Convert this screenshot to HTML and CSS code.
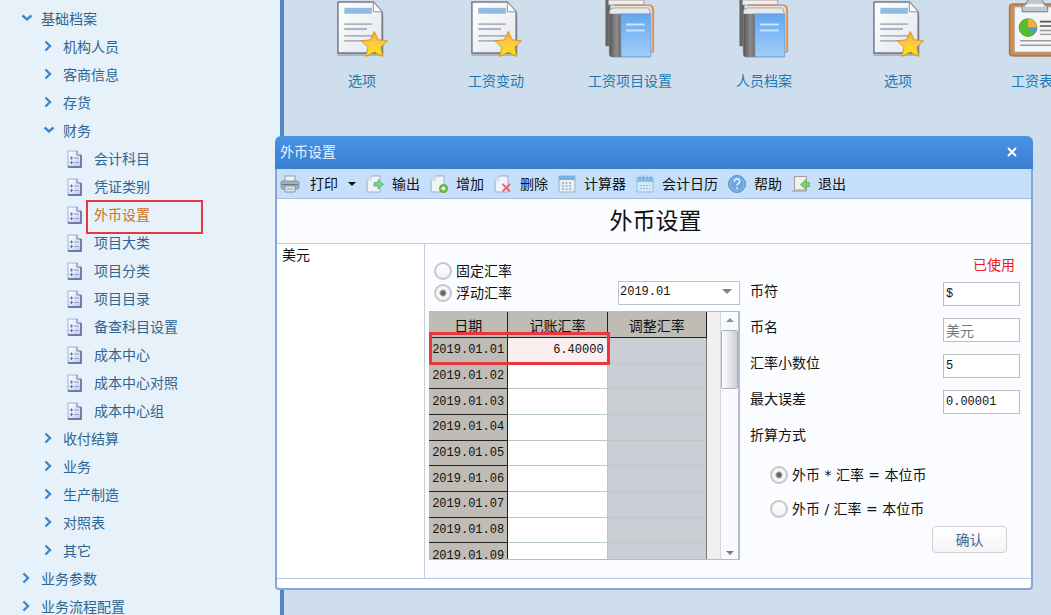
FILE: index.html
```
<!DOCTYPE html>
<html lang="zh-CN">
<head>
    <meta charset="UTF-8">
    <meta name="viewport" content="width=device-width, initial-scale=1.0">
    <title>外币设置</title>
    <link rel="stylesheet" href="styles.css">
</head>
<body>
    <!-- 图标 -->
    <svg class="sprite" width="0" height="0">
        <defs>
            <linearGradient id="gPaper" x1="0" y1="0" x2="1" y2="1">
                <stop offset="0" stop-color="#ffffff"/><stop offset="1" stop-color="#e2e5ea"/>
            </linearGradient>
            <linearGradient id="gStar" x1="0" y1="0" x2="0" y2="1">
                <stop offset="0" stop-color="#f9a51f"/><stop offset=".45" stop-color="#ffc947"/><stop offset="1" stop-color="#ffe600"/>
            </linearGradient>
            <linearGradient id="gBook" x1="0" y1="0" x2="0" y2="1">
                <stop offset="0" stop-color="#62a6ee"/><stop offset="1" stop-color="#a3cef8"/>
            </linearGradient>
            <linearGradient id="gSpine" x1="0" y1="0" x2="1" y2="0">
                <stop offset="0" stop-color="#555"/><stop offset=".6" stop-color="#8d8d8d"/><stop offset="1" stop-color="#6b6b6b"/>
            </linearGradient>
            <linearGradient id="gLeaf" x1="0" y1="0" x2="1" y2="1">
                <stop offset="0" stop-color="#ffffff"/><stop offset="1" stop-color="#b9cff5"/>
            </linearGradient>
        </defs>
        <symbol id="i-right" viewBox="0 0 10 12"><path d="M2.5 1.5 7 6 2.5 10.5" fill="none" stroke="#3f86cf" stroke-width="2.4"/></symbol>
        <symbol id="i-down" viewBox="0 0 12 10"><path d="M1.5 2.5 6 6.5 10.5 2.5" fill="none" stroke="#3f86cf" stroke-width="2.4"/></symbol>
        <symbol id="i-leaf" viewBox="0 0 15 18">
            <path d="M1 1h9l4 4v12H1z" fill="url(#gLeaf)" stroke="#a3aed0"/>
            <path d="M14 5v12H1" fill="none" stroke="#5a5f95" stroke-width="1.4"/>
            <path d="M10 1v4h4" fill="#fff" stroke="#6b7099"/>
            <path d="M3 8h3M4.500 6.500v3M3 12.500h3M4.500 11v3" stroke="#6a7096"/>
            <path d="M7.500 8h4M7.500 12.500h4" stroke="#8b98c0"/>
        </symbol>
        <symbol id="i-doc" viewBox="0 0 54 60">
            <path d="M2 3h38l9 11v41H2z" fill="#000" opacity=".18" transform="translate(0 2)"/>
            <path d="M2.500 2h36l9 10v42h-45z" fill="url(#gPaper)" stroke="#737889" stroke-width="1.500"/>
            <path d="M38.500 2v10h9z" fill="#fff" stroke="#8d93a3"/>
            <path d="M9 8h28v6H9z" fill="#8fbce1"/>
            <path d="M9 24.500h28M9 29.500h23M9 36.500h28M9 41.500h22" stroke="#aeb1c1" stroke-width="1.800"/>
            <path d="M39.500 32l4 8.500 9.500 1-7 6.500 2 9.500-8.500-4.500-8.500 4.500 2-9.500-7-6.500 9.500-1z" fill="url(#gStar)" stroke="#cf8811" stroke-width=".8" stroke-linejoin="round"/>
        </symbol>
        <symbol id="i-book" viewBox="0 0 54 60">
            <path d="M2 0h5v47H2z" fill="#666"/>
            <path d="M5 0h36v5H5z" fill="#f1eeee" stroke="#99938f" stroke-width=".8"/>
            <path d="M11 5h37q3 1 3 5v43h-5z" fill="#e6a266" stroke="#b66f38" stroke-width=".6"/>
            <path d="M9 6h38l2 3v43H9z" fill="#eee5df"/>
            <path d="M6 12q1-4 5-4h35l2 7v43H9q-3 0-3-3z" fill="#e9e9eb" stroke="#949494" stroke-width=".8"/>
            <path d="M6 14h12v44H9q-3 0-3-3z" fill="url(#gSpine)"/>
            <path d="M18 14h30v43.500H18z" fill="url(#gBook)" stroke="#6aa5e4" stroke-width=".8"/>
            <path d="M23 25h19M23 31h19" stroke="#c8e5ff" stroke-width="2"/>
        </symbol>
        <symbol id="i-board" viewBox="0 0 54 60">
            <g transform="translate(3 0)">
                <rect x="1" y="4" width="52" height="53" rx="3" fill="#cf8a50" stroke="#9b602f"/>
                <path d="M6 7h42v46H6z" fill="#f4f5f7" stroke="#aaa"/>
                <path d="M14 12v-5q0-2 4-3 1-6 9-6t9 6q4 1 4 3v5z" fill="#c3c7cc" stroke="#777"/>
                <path d="M18 4h18v3H18z" fill="#f1f1f1"/>
                <circle cx="20" cy="28" r="9" fill="#59bd31" stroke="#4f9d33"/>
                <path d="M20 28v-9a9 9 0 0 1 9 9z" fill="#f7af3c"/>
                <path d="M20 28h9a9 9 0 0 1-3 6.500z" fill="#5298e0"/>
                <path d="M32 22h14M32 26.500h14" stroke="#555" stroke-width="1.600"/>
                <path d="M32 31h14M32 35h14M12 41.500h34M12 46h34" stroke="#999" stroke-width="1.400"/>
            </g>
        </symbol>
        <symbol id="i-print" viewBox="0 0 20 18">
            <path d="M5 1h10v6H5z" fill="#eef4fa" stroke="#8d9baa"/>
            <rect x="1" y="6" width="18" height="8" rx="1.500" fill="#a4afbc" stroke="#8492a2"/>
            <path d="M2 9.500h16" stroke="#68788a"/>
            <path d="M5 11h10v6H5z" fill="#dfe8f1" stroke="#8492a2"/>
            <path d="M7 14h6" stroke="#8492a2"/>
        </symbol>
        <symbol id="i-sheet" viewBox="0 0 18 18">
            <path d="M1 5 5 1h9v16H1z" fill="#eef4fa" stroke="#9aafc5"/>
            <path d="M5 1v4H1z" fill="#fff" stroke="#b3c3d4"/>
        </symbol>
        <symbol id="i-export" viewBox="0 0 18 18">
            <use href="#i-sheet"/>
            <path d="M8 7.500h4V4.500l5.500 4.800-5.500 4.800v-3H8z" fill="#7bd18b" stroke="#56b56a" stroke-width=".8"/>
        </symbol>
        <symbol id="i-add" viewBox="0 0 18 18">
            <use href="#i-sheet"/>
            <circle cx="13.500" cy="13.500" r="4" fill="#78c244" stroke="#5ba72d"/>
            <path d="M11.500 13.500h4M13.500 11.500v4" stroke="#fff" stroke-width="1.400"/>
        </symbol>
        <symbol id="i-del" viewBox="0 0 18 18">
            <use href="#i-sheet"/>
            <path d="M8.500 9l7.500 7.500M16 9l-7.500 7.500" stroke="#e56b74" stroke-width="2"/>
        </symbol>
        <symbol id="i-calc" viewBox="0 0 18 18">
            <path d="M1 1h16v16H1z" fill="#e9eff6" stroke="#a1b0c1"/>
            <path d="M1 1h16v4H1z" fill="#74b1e5"/>
            <path d="M4 8h10M4 11h10M4 14h10" stroke="#9ba9ba" stroke-width="1.700" stroke-dasharray="2 1.500"/>
        </symbol>
        <symbol id="i-date" viewBox="0 0 18 18">
            <path d="M1 2.500h16V17H1z" fill="#d6e9f9" stroke="#93bde0"/>
            <path d="M1 3h16v4H1z" fill="#8abce5"/>
            <path d="M4 .5v4M7.500.5v4M11 .5v4M14.500.5v4" stroke="#6ba4d5"/>
            <path d="M4 10.500h10M4 13.500h10" stroke="#94bcdd" stroke-dasharray="2 1"/>
        </symbol>
        <symbol id="i-help" viewBox="0 0 18 18">
            <circle cx="9" cy="9" r="8.500" fill="#6ca5df" stroke="#5a91cc"/>
            <circle cx="9" cy="9" r="7" fill="none" stroke="#90bde9"/>
            <path d="M6.300 7q0-3 2.700-3t2.700 2.500q0 1.500-1.700 2.300-1 .6-1 2" fill="none" stroke="#e8f4ff" stroke-width="1.500"/>
            <circle cx="9" cy="13.300" r="1" fill="#e8f4ff"/>
        </symbol>
        <symbol id="i-exit" viewBox="0 0 18 18">
            <path d="M2.500 1.500h12V15h-12z" fill="#eef2f2" stroke="#a39d95"/>
            <path d="M0 16h15" stroke="#b7aaa0" stroke-width="1.500"/>
            <path d="M18 7.500h-4V4.500L8.500 9.500l5.500 5v-3h4z" fill="#80cf78" stroke="#56ae50" stroke-width=".8"/>
        </symbol>
    </svg>

    <!-- 左侧菜单树 -->
    <nav class="sidebar">
        <ul class="tree">
            <li><a href="#"><svg class="down"><use href="#i-down"/></svg>基础档案</a>
                <ul>
                    <li><a href="#"><svg><use href="#i-right"/></svg>机构人员</a></li>
                    <li><a href="#"><svg><use href="#i-right"/></svg>客商信息</a></li>
                    <li><a href="#"><svg><use href="#i-right"/></svg>存货</a></li>
                    <li><a href="#"><svg class="down"><use href="#i-down"/></svg>财务</a>
                        <ul class="leaves">
                            <li><a href="#"><svg><use href="#i-leaf"/></svg>会计科目</a></li>
                            <li><a href="#"><svg><use href="#i-leaf"/></svg>凭证类别</a></li>
                            <li><a href="#" class="current"><svg><use href="#i-leaf"/></svg>外币设置</a></li>
                            <li><a href="#"><svg><use href="#i-leaf"/></svg>项目大类</a></li>
                            <li><a href="#"><svg><use href="#i-leaf"/></svg>项目分类</a></li>
                            <li><a href="#"><svg><use href="#i-leaf"/></svg>项目目录</a></li>
                            <li><a href="#"><svg><use href="#i-leaf"/></svg>备查科目设置</a></li>
                            <li><a href="#"><svg><use href="#i-leaf"/></svg>成本中心</a></li>
                            <li><a href="#"><svg><use href="#i-leaf"/></svg>成本中心对照</a></li>
                            <li><a href="#"><svg><use href="#i-leaf"/></svg>成本中心组</a></li>
                        </ul>
                    </li>
                    <li><a href="#"><svg><use href="#i-right"/></svg>收付结算</a></li>
                    <li><a href="#"><svg><use href="#i-right"/></svg>业务</a></li>
                    <li><a href="#"><svg><use href="#i-right"/></svg>生产制造</a></li>
                    <li><a href="#"><svg><use href="#i-right"/></svg>对照表</a></li>
                    <li><a href="#"><svg><use href="#i-right"/></svg>其它</a></li>
                </ul>
            </li>
            <li><a href="#"><svg><use href="#i-right"/></svg>业务参数</a></li>
            <li><a href="#"><svg><use href="#i-right"/></svg>业务流程配置</a></li>
        </ul>
    </nav>

    <!-- 桌面快捷方式 -->
    <main class="desktop">
        <a href="#" class="shortcut"><svg><use href="#i-doc"/></svg>选项</a>
        <a href="#" class="shortcut"><svg><use href="#i-doc"/></svg>工资变动</a>
        <a href="#" class="shortcut"><svg><use href="#i-book"/></svg>工资项目设置</a>
        <a href="#" class="shortcut"><svg><use href="#i-book"/></svg>人员档案</a>
        <a href="#" class="shortcut"><svg><use href="#i-doc"/></svg>选项</a>
        <a href="#" class="shortcut"><svg><use href="#i-board"/></svg>工资表</a>
    </main>

    <!-- 外币设置窗口 -->
    <section class="window">
        <header class="titlebar">
            <span>外币设置</span>
            <button type="button" class="close" aria-label="关闭"><svg viewBox="0 0 10 10"><path d="M1 1l8 8M9 1L1 9" stroke="#fff" stroke-width="2"/></svg></button>
        </header>
        <div class="window-body">
            <div class="toolbar">
                <button type="button" class="print"><svg><use href="#i-print"/></svg>打印<i class="caret"></i></button>
                <button type="button"><svg><use href="#i-export"/></svg>输出</button>
                <button type="button"><svg><use href="#i-add"/></svg>增加</button>
                <button type="button"><svg><use href="#i-del"/></svg>删除</button>
                <button type="button"><svg><use href="#i-calc"/></svg>计算器</button>
                <button type="button"><svg><use href="#i-date"/></svg>会计日历</button>
                <button type="button"><svg><use href="#i-help"/></svg>帮助</button>
                <button type="button"><svg><use href="#i-exit"/></svg>退出</button>
            </div>
            <h1>外币设置</h1>
            <div class="content">
                <div class="currency-list">美元</div>
                <form class="panel">
                    <div class="rates">
                        <div class="rate-options">
                            <div class="rate-type">
                                <label><input type="radio" name="rateType">固定汇率</label>
                                <label><input type="radio" name="rateType" checked>浮动汇率</label>
                            </div>
                            <div class="period">
                                <select aria-label="期间"><option>2019.01</option></select>
                            </div>
                        </div>
                        <div class="grid">
                            <div class="grid-rows">
                                <table>
                                    <thead>
                                        <tr><th>日期</th><th>记账汇率</th><th>调整汇率</th></tr>
                                    </thead>
                                    <tbody>
                                        <tr class="marked"><th>2019.01.01</th><td>6.40000</td><td></td></tr>
                                        <tr><th>2019.01.02</th><td></td><td></td></tr>
                                        <tr><th>2019.01.03</th><td></td><td></td></tr>
                                        <tr><th>2019.01.04</th><td></td><td></td></tr>
                                        <tr><th>2019.01.05</th><td></td><td></td></tr>
                                        <tr><th>2019.01.06</th><td></td><td></td></tr>
                                        <tr><th>2019.01.07</th><td></td><td></td></tr>
                                        <tr><th>2019.01.08</th><td></td><td></td></tr>
                                        <tr><th>2019.01.09</th><td></td><td></td></tr>
                                    </tbody>
                                </table>
                            </div>
                            <div class="scrollbar">
                                <i class="up"></i>
                                <div class="thumb"></div>
                                <i class="down"></i>
                            </div>
                            <div class="mark"></div>
                        </div>
                    </div>
                    <div class="details">
                        <p class="status">已使用</p>
                        <div class="field"><label for="symbol">币符</label><input type="text" id="symbol" value="$"></div>
                        <div class="field"><label for="name">币名</label><input type="text" id="name" class="name" value="美元" disabled></div>
                        <div class="field"><label for="digits">汇率小数位</label><input type="text" id="digits" value="5"></div>
                        <div class="field"><label for="error">最大误差</label><input type="text" id="error" value="0.00001"></div>
                        <div class="field"><span>折算方式</span></div>
                        <div class="formula">
                            <label><input type="radio" name="formula" checked>外币 * 汇率 = 本位币</label>
                            <label><input type="radio" name="formula">外币 / 汇率 = 本位币</label>
                        </div>
                        <button type="button" class="confirm">确认</button>
                    </div>
                </form>
            </div>
        </div>
    </section>
</body>
</html>
```

FILE: styles.css
```
*,
*::before,
*::after {
    box-sizing: border-box;
}

body {
    margin: 0;
    height: 100vh;
    display: flex;
    overflow: hidden;
    position: relative;
    background-color: #cfdeec;
    font-family: "Liberation Sans", "Noto Sans CJK SC", sans-serif;
    font-size: 14px;
    line-height: 20px;
    color: #111;
}

a {
    color: inherit;
    text-decoration: none;
}

button,
input,
select {
    font: inherit;
    color: inherit;
}

.sprite {
    position: absolute;
}

/* 左侧菜单 */
.sidebar {
    flex: 0 0 284px;
    background-color: #e6f1fa;
    border-right: 4px solid #5585c0;
    color: #2f6591;
    overflow: hidden;
}

.tree,
.tree ul {
    list-style: none;
    margin: 0;
    padding: 0;
}

.tree {
    padding: 5px 0 0 21px;
}

.tree ul {
    padding-left: 22px;
}

.tree a {
    display: flex;
    align-items: center;
    height: 28px;
    white-space: nowrap;
}

.tree svg {
    width: 10px;
    height: 12px;
    margin: 0 10px 3px 0;
}

.tree svg.down {
    width: 12px;
    height: 10px;
    margin-right: 8px;
}

.tree .leaves {
    padding-left: 24px;
}

.tree .leaves svg {
    width: 15px;
    height: 18px;
    margin: 0 12px 0 0;
}

.tree .current {
    color: #c9731b;
    position: relative;
}

/* 红色标记框 */
.current::after {
    content: "";
    position: absolute;
    left: 19px;
    top: -1px;
    width: 117px;
    height: 34px;
    border: 2px solid #e8383d;
}

/* 快捷方式 */
.desktop {
    flex: 1;
    min-width: 0;
    display: flex;
    align-items: flex-start;
    padding-left: 11px;
    overflow: hidden;
}

.shortcut {
    flex: 0 0 134px;
    display: flex;
    flex-direction: column;
    align-items: center;
    gap: 12px;
    color: #1b7bb5;
}

.shortcut svg {
    width: 54px;
    height: 59px;
    overflow: visible;
}

/* 窗口 */
.window {
    position: absolute;
    left: 275px;
    right: 18px;
    top: 136px;
}

.titlebar {
    display: flex;
    justify-content: space-between;
    align-items: center;
    height: 33px;
    padding: 0 16px 2px 5px;
    border-radius: 6px 6px 0 0;
    background: linear-gradient(to bottom, #4893e8, #3b7ed0);
    color: #e8f3ff;
}

.close {
    display: flex;
    padding: 0;
    border: none;
    background: none;
}

.close svg {
    width: 10px;
    height: 10px;
}

.window-body {
    border: 2px solid #85a6dc;
    border-top: none;
    border-radius: 0 0 4px 4px;
    background-color: #fff;
    padding-bottom: 9px;
}

.toolbar {
    display: flex;
    align-items: center;
    gap: 10px;
    height: 30px;
    padding: 1px 0 0 3px;
    background-color: #c6e0fb;
    border-bottom: 1px solid #a9bdd5;
}

.toolbar button {
    display: flex;
    align-items: center;
    gap: 8px;
    padding: 0;
    border: none;
    background: none;
    white-space: nowrap;
}

.toolbar svg {
    width: 18px;
    height: 18px;
}

.toolbar .print {
    gap: 10px;
}

.toolbar .print svg {
    width: 20px;
}

.caret {
    border: 4px solid transparent;
    border-top-color: #111;
    border-bottom: none;
}

h1 {
    margin: 0;
    padding-left: 3px;
    height: 45px;
    font-size: 23px;
    font-weight: normal;
    line-height: 44px;
    text-align: center;
    background-color: #fafcff;
    border-bottom: 1px solid #c5cdd8;
}

.content {
    display: flex;
    border-bottom: 1px solid #b5c9e3;
}

.currency-list {
    flex: 0 0 148px;
    padding: 1px 5px;
    border-right: 1px solid #c5cdd8;
}

.panel {
    flex: 1;
    display: flex;
    gap: 10px;
    padding: 0 11px 0 4px;
    background-color: #fafcff;
}

.rates {
    flex: 0 0 311px;
}

.rate-options {
    display: flex;
    justify-content: space-between;
    align-items: flex-end;
    height: 67px;
    padding: 0 0 7px 5px;
}

.rate-type label,
.formula label {
    display: flex;
    align-items: center;
    gap: 4px;
    height: 22px;
}

input[type="radio"] {
    appearance: none;
    width: 18px;
    height: 18px;
    margin: 0;
    border: 2px solid #c6c8cc;
    border-radius: 50%;
    background: linear-gradient(to bottom, #fff, #f1f1f1);
}

input[type="radio"]:checked {
    background: radial-gradient(circle, #666 2px, #f6f6f6 4px);
}

.period {
    position: relative;
    width: 122px;
    height: 24px;
}

.period select {
    appearance: none;
    width: 100%;
    height: 100%;
    padding: 0 1px 2px;
    border: 1px solid #b9c3d0;
    border-radius: 0;
    background-color: #fff;
    font-family: "Liberation Mono", monospace;
    font-size: 12px;
}

.period::after {
    content: "";
    position: absolute;
    right: 8px;
    top: 9px;
    border: 5px solid transparent;
    border-top-color: #7b838c;
    border-bottom: none;
}

/* 汇率表格 */
.grid {
    display: flex;
    position: relative;
    height: 249px;
    margin-bottom: 18px;
    border: 1px solid #b5bcc6;
    border-left: none;
    border-right-width: 2px;
    background-color: #f0f0f0;
}

.grid-rows {
    flex: 0 0 291px;
    overflow: hidden;
}

table {
    table-layout: fixed;
    width: 278px;
    height: 257px;
    border-collapse: separate;
    border-spacing: 0;
}

th,
td {
    padding: 0 3px;
    line-height: 20px;
}

th {
    width: 79px;
    font-weight: normal;
    background-color: #bfbcb6;
    border-right: 1px solid #222;
    border-bottom: 1px solid #222;
}

thead th {
    height: 26px;
    padding-top: 2px;
}

thead th + th {
    width: 99px;
}

tbody th,
td {
    font-family: "Liberation Mono", monospace;
    font-size: 12px;
}

td {
    text-align: right;
    background-color: #fff;
    border-right: 1px solid #b9cac4;
    border-bottom: 1px solid #b9cac4;
}

td:last-child {
    background-color: #cbced4;
    border-right: 1px solid #6f7b77;
}

.marked td:nth-child(2) {
    background-color: #faeeee;
}

.mark {
    position: absolute;
    left: 0;
    top: 20px;
    width: 181px;
    height: 33px;
    border: 3px solid #e8383d;
}

.scrollbar {
    flex: 1;
    display: flex;
    flex-direction: column;
    align-items: center;
    padding: 6px 0 4px;
    border-left: 1px solid #d3d6dc;
    background-color: #f9faff;
}

.scrollbar i {
    border: 4px solid transparent;
}

.scrollbar .up {
    border-top: none;
    border-bottom-color: #8b9099;
}

.scrollbar .down {
    margin-top: auto;
    border-bottom: none;
    border-top-color: #777d86;
}

.thumb {
    width: 100%;
    height: 59px;
    margin-top: 8px;
    border: 1px solid #aaafb8;
    border-radius: 2px;
    background: linear-gradient(to right, #fdfdfd, #cdcfd6);
}

/* 币种信息 */
.details {
    flex: 1;
    padding-top: 11px;
}

.status {
    margin: 0 5px 1px 0;
    text-align: right;
    color: #f01818;
}

.field {
    display: flex;
    justify-content: space-between;
    align-items: center;
    height: 36px;
}

.field label,
.field span {
    padding-bottom: 6px;
}

.field input {
    width: 77px;
    height: 24px;
    padding: 0 2px;
    border: 1px solid #b9bcc2;
    background-color: #fff;
    font-family: "Liberation Mono", monospace;
    font-size: 12px;
}

.field .name {
    font-family: "Noto Sans CJK SC", sans-serif;
    font-size: 14px;
    color: #777;
}

.formula {
    padding: 2px 0 0 20px;
    font-family: "DejaVu Sans", "Noto Sans CJK SC", sans-serif;
}

.formula label {
    height: 34px;
}

.confirm {
    display: block;
    width: 75px;
    height: 27px;
    margin: 0 13px 0 auto;
    padding: 0;
    border: 1px solid #cfd1d5;
    border-radius: 4px;
    background: linear-gradient(to bottom, #fff, #f5f5f5);
    color: #44688a;
}
```
